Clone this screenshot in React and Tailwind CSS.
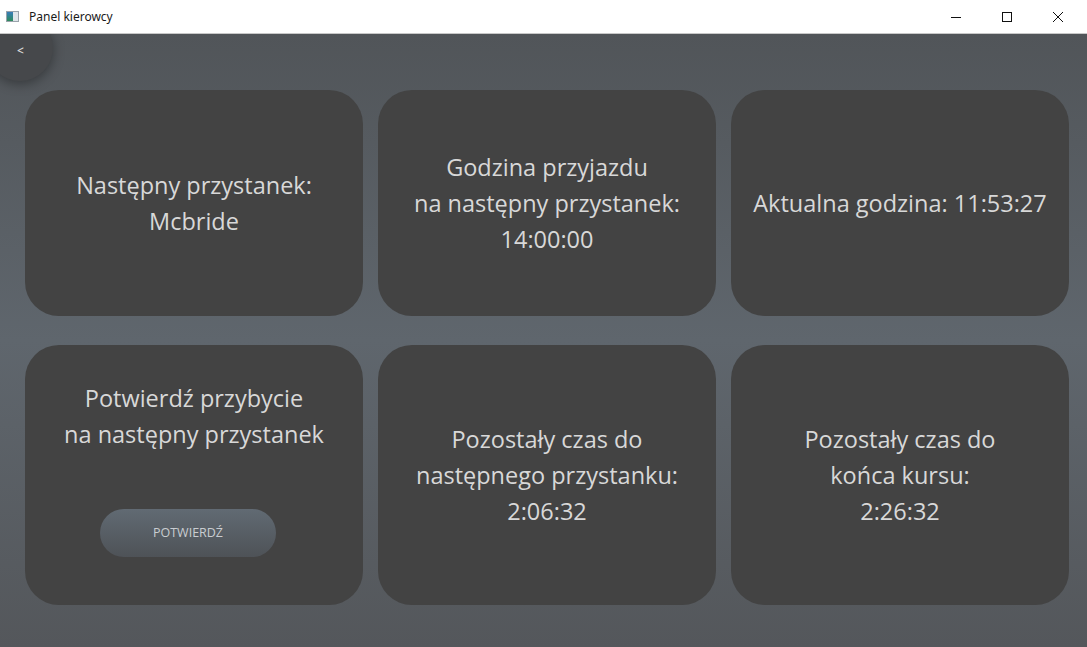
export default function App() {
  const font = { fontFamily: '"Open Sans", "Noto Sans", sans-serif' };
  const Card = ({ children, className = "" }) => (
    <div className={`bg-[#434343] rounded-[34px] flex flex-col items-center justify-center text-center text-[#d8d8d8] text-[23.5px] leading-[36px] ${className}`}>
      {children}
    </div>
  );
  return (
    <div className="w-[1087px] h-[647px] flex flex-col overflow-hidden" style={font}>
      {/* Title bar */}
      <div className="h-[34px] bg-white border-b border-[#c8c8c8] flex items-center shrink-0">
        <div className="ml-[6px] w-[13px] h-[11px] border border-[#9aa3ab] bg-[#e8ecef] flex">
          <div className="w-[6px] h-full bg-gradient-to-b from-[#3a7bb8] to-[#2f8a5a]" />
          <div className="flex-1 bg-[#dfe5ea]" />
        </div>
        <span className="ml-[10px] text-[12px] text-[#1a1a1a]" style={{ fontFamily: '"Noto Sans", sans-serif' }}>Panel kierowcy</span>
        <div className="ml-auto flex h-full pr-[4px]">
          <div className="w-[51px] h-full flex items-center justify-center">
            <svg width="10" height="10" viewBox="0 0 10 10"><line x1="0" y1="5.5" x2="10" y2="5.5" stroke="#111" strokeWidth="1" /></svg>
          </div>
          <div className="w-[51px] h-full flex items-center justify-center">
            <svg width="10" height="10" viewBox="0 0 10 10"><rect x="0.5" y="0.5" width="9" height="9" fill="none" stroke="#111" strokeWidth="1" /></svg>
          </div>
          <div className="w-[51px] h-full flex items-center justify-center">
            <svg width="10" height="10" viewBox="0 0 10 10"><path d="M0 0L10 10M10 0L0 10" stroke="#111" strokeWidth="1" /></svg>
          </div>
        </div>
      </div>
      {/* Content */}
      <div className="relative flex-1 overflow-hidden bg-[linear-gradient(to_bottom,#515559_0%,#5f666d_50%,#54575b_100%)] pl-[25px] pt-[56px]">
        <div className="absolute left-[-13px] top-[-19px] w-[66px] h-[66px] rounded-full bg-[#46484b] shadow-[0_3px_12px_rgba(0,0,0,0.35)] flex items-center justify-center">
          <span className="text-[#d8d8d8] text-[12px] font-semibold mt-[6px] ml-[1px]">&lt;</span>
        </div>
        <div className="grid grid-cols-[338px_338px_338px] grid-rows-[226px_260px] gap-x-[15px] gap-y-[29px]">
          <Card>
            <div>Następny przystanek:</div>
            <div>Mcbride</div>
          </Card>
          <Card>
            <div>Godzina przyjazdu</div>
            <div>na następny przystanek:</div>
            <div>14:00:00</div>
          </Card>
          <Card>
            <div>Aktualna godzina: 11:53:27</div>
          </Card>
          <Card className="justify-start pt-[35px]">
            <div>Potwierdź przybycie</div>
            <div>na następny przystanek</div>
            <button className="mt-[57px] mr-[12px] w-[176px] h-[48px] rounded-full bg-[linear-gradient(to_bottom,#616a73,#4e5257)] text-[12.5px] leading-none text-[#c9cdd1]">POTWIERDŹ</button>
          </Card>
          <Card>
            <div>Pozostały czas do</div>
            <div>następnego przystanku:</div>
            <div>2:06:32</div>
          </Card>
          <Card>
            <div>Pozostały czas do</div>
            <div>końca kursu:</div>
            <div>2:26:32</div>
          </Card>
        </div>
      </div>
    </div>
  );
}
